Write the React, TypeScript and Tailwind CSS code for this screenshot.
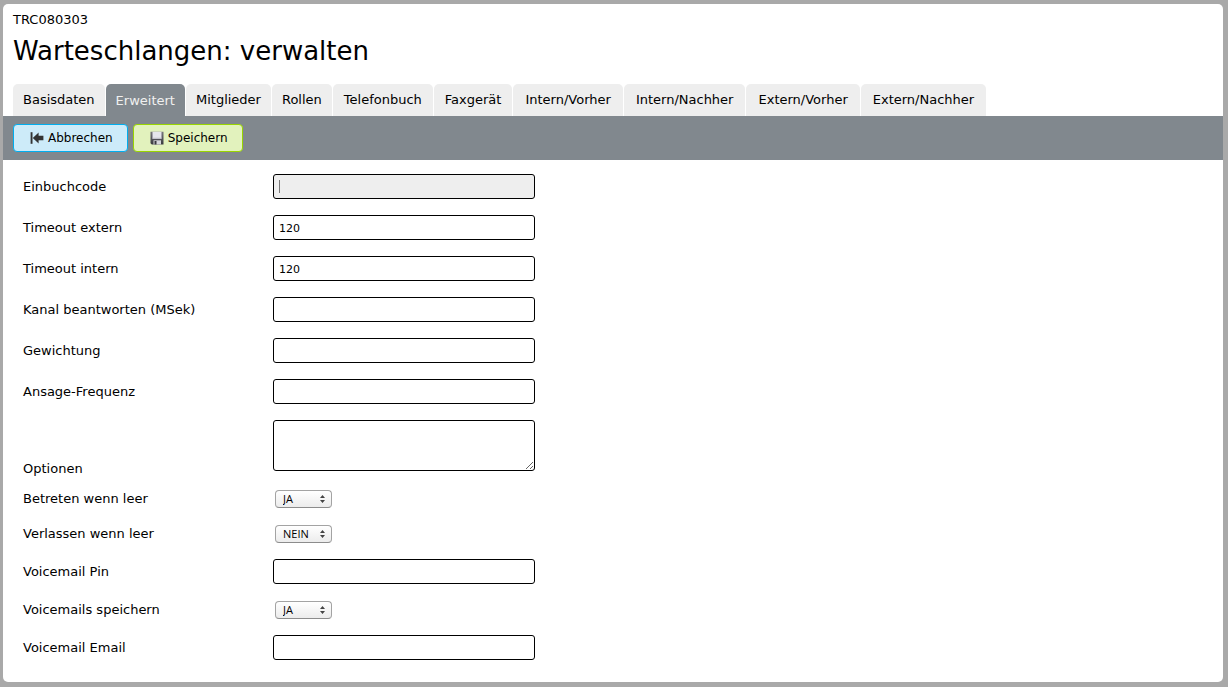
import { useState } from "react";

const tabs = [
  { name: "Basisdaten", pad: "px-[10px]" },
  { name: "Erweitert", pad: "px-[10px]" },
  { name: "Mitglieder", pad: "px-[10px]" },
  { name: "Rollen", pad: "px-[10px]" },
  { name: "Telefonbuch", pad: "px-[11px]" },
  { name: "Faxgerät", pad: "px-[11px]" },
  { name: "Intern/Vorher", pad: "px-3" },
  { name: "Intern/Nachher", pad: "px-3" },
  { name: "Extern/Vorher", pad: "px-3" },
  { name: "Extern/Nachher", pad: "px-3" },
];

type Field = {
  id: string;
  label: string;
  kind: "text" | "textarea" | "select";
  value?: string;
  active?: boolean;
};

const fields: Field[] = [
  { id: "einbuchcode", label: "Einbuchcode", kind: "text", active: true },
  { id: "timeout-extern", label: "Timeout extern", kind: "text", value: "120" },
  { id: "timeout-intern", label: "Timeout intern", kind: "text", value: "120" },
  { id: "kanal", label: "Kanal beantworten (MSek)", kind: "text" },
  { id: "gewichtung", label: "Gewichtung", kind: "text" },
  { id: "ansage", label: "Ansage-Frequenz", kind: "text" },
  { id: "optionen", label: "Optionen", kind: "textarea" },
  { id: "betreten", label: "Betreten wenn leer", kind: "select", value: "JA" },
  { id: "verlassen", label: "Verlassen wenn leer", kind: "select", value: "NEIN" },
  { id: "voicemail-pin", label: "Voicemail Pin", kind: "text" },
  { id: "voicemails-speichern", label: "Voicemails speichern", kind: "select", value: "JA" },
  { id: "voicemail-email", label: "Voicemail Email", kind: "text" },
];

function BackIcon() {
  return (
    <svg viewBox="0 0 14 14" className="size-[14px]" aria-hidden="true">
      <path d="M0.6 1.2h1.9v11.6H0.6z" fill="#333" />
      <path d="M2.8 7 8.6 1.4v3.4h4.8v4.4H8.6v3.4z" fill="#333" />
    </svg>
  );
}

function DiskIcon() {
  return (
    <svg viewBox="0 0 14 14" className="size-[14px]" aria-hidden="true">
      <defs>
        <linearGradient id="disk-body" x1="0" y1="0" x2="0" y2="1">
          <stop offset="0" stopColor="#77777c" />
          <stop offset="1" stopColor="#38383e" />
        </linearGradient>
      </defs>
      <path d="M0.5 0.8h13v12.7H1.8L0.5 12.2z" fill="url(#disk-body)" />
      <path d="M2.5 0.8h9v6.9h-9z" fill="#e6e6ec" />
      <path d="M2.5 6.7h9v1h-9z" fill="#c6c6ce" />
      <path d="M3.5 9.3h7.5v4.2H3.5z" fill="#d6d6dc" />
      <path d="M4.5 10h2v3.5h-2z" fill="#38383e" />
    </svg>
  );
}

function TextField({ field }: { field: Field }) {
  return (
    <div className="relative w-[262px]">
      <input
        id={field.id}
        type="text"
        defaultValue={field.value}
        className={`block h-[25px] w-full rounded-[3px] border border-black px-[5px] pt-[2px] text-[11px] outline-none ${
          field.active ? "bg-[#eeeeee]" : "bg-white"
        }`}
      />
      {field.active && (
        <span className="pointer-events-none absolute top-[6px] left-[6px] h-[13px] w-px bg-[#777777]" />
      )}
    </div>
  );
}

function SelectField({ field }: { field: Field }) {
  return (
    <div className="relative ml-[2px] w-[57px]">
      <select
        id={field.id}
        defaultValue={field.value}
        className="block h-[18px] w-full appearance-none rounded-[4px] border border-[#a3a3a3] border-b-[#8c8c8c] bg-linear-to-b from-white to-[#ececec] pl-[7px] font-['Open_Sans','Noto_Sans',sans-serif] text-[11px] leading-4 outline-none"
      >
        <option>JA</option>
        <option>NEIN</option>
      </select>
      <svg
        viewBox="0 0 5 8"
        className="pointer-events-none absolute top-[5px] right-[7px] h-[8px] w-[5px]"
        aria-hidden="true"
      >
        <path d="M2.5 0 5 3H0zM0 5h5L2.5 8z" fill="#444" />
      </svg>
    </div>
  );
}

function Row({ field }: { field: Field }) {
  return (
    <div
      className={`flex min-h-[35px] px-5 pt-2 ${field.kind === "textarea" ? "items-end pb-1" : "items-center pb-2"}`}
    >
      <label htmlFor={field.id} className="w-[250px] shrink-0 text-[13px] leading-4">
        {field.label}
      </label>
      {field.kind === "text" && <TextField field={field} />}
      {field.kind === "select" && <SelectField field={field} />}
      {field.kind === "textarea" && (
        <textarea
          id={field.id}
          className="mb-[6px] block h-[51px] w-[262px] rounded-[3px] border border-black px-[5px] py-1 text-[11px] outline-none"
        />
      )}
    </div>
  );
}

export default function App() {
  const [current, setCurrent] = useState("Erweitert");
  return (
    <div className="min-h-screen bg-[#a9a9a9] pt-1 pr-[5px] pb-[5px] pl-[3px] font-['Verdana','DejaVu_Sans',sans-serif] text-black">
      <main className="rounded-[5px] bg-white pb-[14px]">
        <header className="px-[10px] pt-2">
          <p className="text-[13px] leading-4">TRC080303</p>
          <h1 className="mt-1 text-[26px] leading-[38px]">Warteschlangen: verwalten</h1>
          <nav className="mt-[14px] flex gap-px">
            {tabs.map((tab) => (
              <a
                key={tab.name}
                href="#"
                onClick={(e) => {
                  e.preventDefault();
                  setCurrent(tab.name);
                }}
                className={`h-8 rounded-t-[5px] text-[13px] ${tab.pad} ${
                  tab.name === current ? "bg-[#81888e] leading-[33px] text-[#f0f0f0]" : "bg-[#eeeeee] leading-8"
                }`}
              >
                {tab.name}
              </a>
            ))}
          </nav>
        </header>
        <div className="flex gap-[5px] bg-[#81888e] px-[10px] py-2">
          <button
            type="button"
            className="flex h-7 items-center gap-1 rounded-[4px] border border-[#00aeef] bg-[#cdebf9] pr-[14px] pl-4 text-[12px]"
          >
            <BackIcon />
            Abbrechen
          </button>
          <button
            type="submit"
            form="queue-form"
            className="flex h-7 items-center gap-1 rounded-[4px] border border-[#99d500] bg-[#e2f2bd] pr-[14px] pl-4 text-[12px]"
          >
            <DiskIcon />
            Speichern
          </button>
        </div>
        <form id="queue-form" className="pt-[6px]" onSubmit={(e) => e.preventDefault()}>
          {fields.map((field) => (
            <Row key={field.id} field={field} />
          ))}
        </form>
      </main>
    </div>
  );
}
